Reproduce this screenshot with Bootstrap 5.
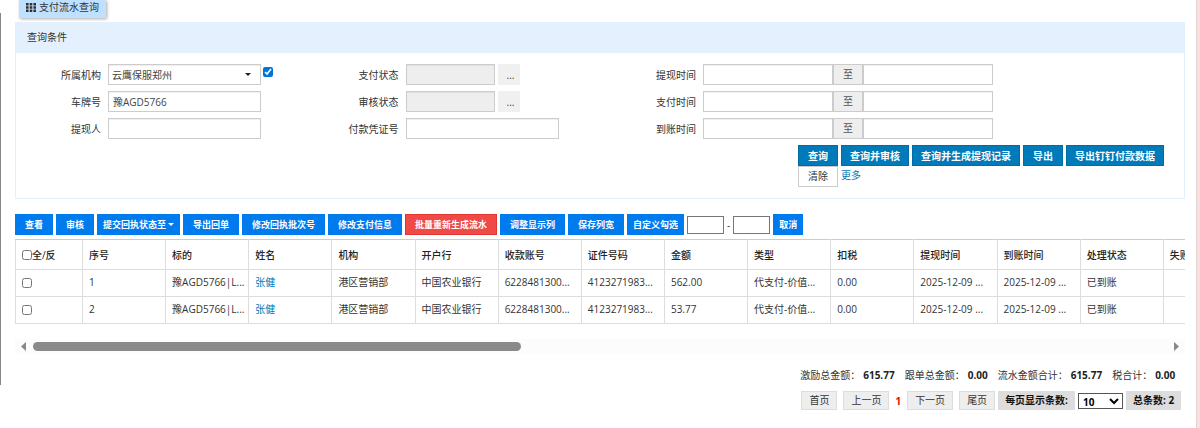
<!DOCTYPE html>
<html lang="zh-CN">
<head>
<meta charset="utf-8">
<meta name="viewport" content="width=device-width, initial-scale=1">
<title>支付流水查询</title>
<link href="https://cdn.jsdelivr.net/npm/bootstrap@5.3.0/dist/css/bootstrap.min.css" rel="stylesheet">
<style>
  body { font: 10px/14px "Open Sans", "Noto Sans CJK SC", sans-serif; color: #333; background: #fff; }
  input, select, button { font-family: inherit; border-radius: 0; }
  a { color: #007ab8; text-decoration: none; }
  .rail { width: 1px; background: #888; margin: 13px 0 43px; }
  .edge { width: 4px; background: #f6e0e0; border-left: 1px solid #e3d2d2; }
  .page-body { padding: 0 11px 0 14px; min-width: 0; }
  .page-tab { height: 18px; margin: 0 0 4px 4px; padding: 0 7px 4px; background: #bfe1ff; box-shadow: 1px 1px 3px #0005; gap: 3px; }
  .query { border: 1px solid #e2effc; height: 177px; }
  .query-title { height: 30px; padding: 0 11px 2px; background: #e4f0fd; }
  .query-fields { margin: 11px -12px 0 -10px; }
  .field-row { height: 21px; margin-bottom: 6px; }
  .field-row > label { width: 95px; padding-top: 1px; margin-right: 7px; text-align: right; flex: none; }
  .box { height: 21px; width: 153px; padding: 0 4px 1px; border: 1px solid #ccc; box-shadow: inset 0 1px 1px #0001; color: #444; background: #fff; font-size: 10px; line-height: 14px; }
  .box:disabled { width: 89px; background: #eee; }
  .box.date { width: 130px; }
  .org { appearance: none; padding: 0 3px; width: 153px;
    background: #fff url("data:image/svg+xml,%3Csvg xmlns='http://www.w3.org/2000/svg' width='6' height='3'%3E%3Cpath d='M0 0h6L3 3z' fill='%23222'/%3E%3C/svg%3E") no-repeat right 9px center; }
  .tick { width: 10px; height: 10px; margin: 0; accent-color: #0075d8; flex: none; }
  .org-tick { margin: 0 0 5px 2px; }
  .more-btn { width: 22px; height: 21px; margin-left: 3px; padding: 1px 0 0 4px; border: 0; background: #f0f0f0; color: #444; }
  .to { width: 30px; height: 21px; padding-bottom: 1px; border: 1px solid #ccc; background: #eee; color: #555; }
  .query-actions { padding-left: 197px; gap: 0 3px; }
  .btn { --bs-btn-border-radius: 0; --bs-btn-line-height: 14px; height: 21px; padding: 0 8px; font-size: 10px; display: inline-flex; align-items: center; justify-content: center; white-space: nowrap; }
  .search-btn { min-width: 40px; font-weight: 700; color: #fff; background: #007ab8; border-color: #006da6; }
  .clear-btn { min-width: 40px; color: #333; background: #fff; border-color: #ccc; padding-bottom: 2px; }
  .tools { margin-top: 15px; gap: 0 3px; height: 21px; }
  .tool-btn { padding: 0 9px; font-size: 9px; font-weight: 700; color: #fff; background: #007bed; border-color: #007bed; }
  .tool-btn.tight { padding: 0 5px; }
  .tool-btn.danger { background: #ef4a45; border-color: #e03530; }
  .caret { border: 3px solid transparent; border-top-color: #fff; border-bottom: 0; margin-left: 2px; }
  .range { width: 37px; height: 18px; border: 1px solid #767676; padding: 0 3px; font-size: 10px; }
  .list { margin-top: 4px; overflow: hidden; }
  .list table { table-layout: fixed; width: 1232px; border-collapse: collapse; }
  .list th, .list td { height: 27px; padding: 0 2px 2px 6px; border: 1px solid #ddd; overflow: hidden; text-overflow: ellipsis; white-space: nowrap; }
  .list th { height: 30px; border-top-color: #ccc; font-weight: 500; color: #222; padding-bottom: 0; }
  .list th:first-child { width: 67px; }
  .list .tick { vertical-align: middle; }
  .scroll { margin-top: 15px; height: 15px; padding: 0 6px; gap: 7px; background: #fcfcfc; }
  .scroll-track { height: 9px; }
  .scroll-thumb { height: 9px; width: 43%; border-radius: 5px; background: #8a8a8a; }
  .totals { margin-top: 14px; padding-right: 10px; gap: 0 10px; }
  .totals b { margin-left: 3px; color: #222; }
  .pager { margin-top: 9px; padding-right: 4px; height: 19px; gap: 0 6px; }
  .page-btn { height: 19px; padding: 0 7px 1px; border: 1px solid #ddd; background: #eee; color: #333; font-size: 10px; line-height: 14px; }
  .page-now { color: #f00; }
  .page-size { gap: 0 3px; margin-left: -3px; }
  .pill { height: 19px; padding: 0 7px 1px; background: #ddd; color: #111; font-weight: 700; white-space: nowrap; }
  .size-select { width: 45px; height: 16px; border: 1px solid #555; color: #000; background: #fff; font-size: 10px; font-weight: 700; line-height: 12px; }
</style>
</head>
<body>
<div class="d-flex min-vh-100">
  <div class="rail"></div>
  <main class="page-body flex-grow-1">
    <div class="page-tab d-inline-flex align-items-center align-top">
      <svg width="10" height="9" viewBox="0 0 10 9" fill="#333" aria-hidden="true"><path d="M0 0h2.600v2.400H0zM3.700 0h2.600v2.400H3.700zM7.400 0H10v2.400H7.400zM0 3.300h2.600v2.400H0zM3.700 3.300h2.600v2.400H3.700zM7.400 3.300H10v2.400H7.400zM0 6.600h2.600V9H0zM3.700 6.600h2.600V9H3.700zM7.400 6.600H10V9H7.400z"/></svg>
      <span>支付流水查询</span>
    </div>

    <form class="query">
      <div class="query-title d-flex align-items-center">查询条件</div>
      <div class="query-fields row g-0">
        <div class="col-3">
          <div class="field-row d-flex align-items-center">
            <label for="org">所属机构</label>
            <select id="org" class="box org"><option>云鹰保服郑州</option></select>
            <input type="checkbox" class="tick org-tick" aria-label="包含下级机构" checked>
          </div>
          <div class="field-row d-flex align-items-center"><label for="plate">车牌号</label><input id="plate" class="box" value="豫AGD5766"></div>
          <div class="field-row d-flex align-items-center"><label for="person">提现人</label><input id="person" class="box"></div>
        </div>
        <div class="col-3">
          <div class="field-row d-flex align-items-center"><label for="pay">支付状态</label><input id="pay" class="box" disabled><button type="button" class="more-btn">...</button></div>
          <div class="field-row d-flex align-items-center"><label for="audit">审核状态</label><input id="audit" class="box" disabled><button type="button" class="more-btn">...</button></div>
          <div class="field-row d-flex align-items-center"><label for="voucher">付款凭证号</label><input id="voucher" class="box"></div>
        </div>
        <div class="col-6">
          <div class="field-row d-flex align-items-center"><label for="d1">提现时间</label><input id="d1" class="box date"><span class="to d-flex align-items-center justify-content-center">至</span><input class="box date" aria-label="提现时间止"></div>
          <div class="field-row d-flex align-items-center"><label for="d2">支付时间</label><input id="d2" class="box date"><span class="to d-flex align-items-center justify-content-center">至</span><input class="box date" aria-label="支付时间止"></div>
          <div class="field-row d-flex align-items-center"><label for="d3">到账时间</label><input id="d3" class="box date"><span class="to d-flex align-items-center justify-content-center">至</span><input class="box date" aria-label="到账时间止"></div>
          <div class="query-actions d-flex flex-wrap">
            <button type="button" class="btn search-btn">查询</button>
            <button type="button" class="btn search-btn">查询并审核</button>
            <button type="button" class="btn search-btn">查询并生成提现记录</button>
            <button type="button" class="btn search-btn">导出</button>
            <button type="button" class="btn search-btn">导出钉钉付款数据</button>
            <button type="reset" class="btn clear-btn">清除</button>
            <a href="#" class="pt-1 lh-1">更多</a>
          </div>
        </div>
      </div>
    </form>

    <div class="tools d-flex align-items-center">
      <button class="btn tool-btn">查看</button>
      <button class="btn tool-btn">审核</button>
      <button class="btn tool-btn tight">提交回执状态至<span class="caret"></span></button>
      <button class="btn tool-btn">导出回单</button>
      <button class="btn tool-btn">修改回执批次号</button>
      <button class="btn tool-btn">修改支付信息</button>
      <button class="btn tool-btn danger">批量重新生成流水</button>
      <button class="btn tool-btn">调整显示列</button>
      <button class="btn tool-btn">保存列宽</button>
      <button class="btn tool-btn tight">自定义勾选</button>
      <input class="range" aria-label="起始序号"><span>-</span><input class="range" aria-label="结束序号">
      <button class="btn tool-btn tight">取消</button>
    </div>

    <div class="list">
      <table>
        <thead>
          <tr><th><label class="d-flex align-items-center"><input type="checkbox" class="tick">全/反</label></th><th>序号</th><th>标的</th><th>姓名</th><th>机构</th><th>开户行</th><th>收款账号</th><th>证件号码</th><th>金额</th><th>类型</th><th>扣税</th><th>提现时间</th><th>到账时间</th><th>处理状态</th><th>失败</th></tr>
        </thead>
        <tbody>
          <tr><td><input type="checkbox" class="tick" aria-label="选择第1行"></td><td>1</td><td>豫AGD5766|L...</td><td><a href="#">张健</a></td><td>港区营销部</td><td>中国农业银行</td><td>6228481300...</td><td>4123271983...</td><td>562.00</td><td>代支付-价值...</td><td>0.00</td><td>2025-12-09 ...</td><td>2025-12-09 ...</td><td>已到账</td><td></td></tr>
          <tr><td><input type="checkbox" class="tick" aria-label="选择第2行"></td><td>2</td><td>豫AGD5766|L...</td><td><a href="#">张健</a></td><td>港区营销部</td><td>中国农业银行</td><td>6228481300...</td><td>4123271983...</td><td>53.77</td><td>代支付-价值...</td><td>0.00</td><td>2025-12-09 ...</td><td>2025-12-09 ...</td><td>已到账</td><td></td></tr>
        </tbody>
      </table>
    </div>

    <div class="scroll d-flex align-items-center">
      <svg width="5" height="9" viewBox="0 0 5 9" fill="#888" aria-hidden="true"><path d="M5 0v9L0 4.500z"/></svg>
      <div class="scroll-track flex-grow-1"><div class="scroll-thumb"></div></div>
      <svg width="5" height="9" viewBox="0 0 5 9" fill="#888" aria-hidden="true"><path d="M0 0v9l5-4.500z"/></svg>
    </div>

    <div class="totals d-flex justify-content-end">
      <span>激励总金额：<b>615.77</b></span><span>跟单总金额：<b>0.00</b></span><span>流水金额合计：<b>615.77</b></span><span>税合计：<b>0.00</b></span>
    </div>
    <nav class="pager d-flex align-items-center justify-content-end" aria-label="分页">
      <button class="page-btn">首页</button>
      <button class="page-btn">上一页</button>
      <b class="page-now">1</b>
      <button class="page-btn">下一页</button>
      <button class="page-btn">尾页</button>
      <div class="page-size d-flex align-items-center">
        <label for="size" class="pill d-flex align-items-center">每页显示条数:</label>
        <select id="size" class="size-select"><option>10</option></select>
        <span class="pill d-flex align-items-center">总条数: 2</span>
      </div>
    </nav>
  </main>
  <div class="edge"></div>
</div>
<script src="https://cdn.jsdelivr.net/npm/bootstrap@5.3.0/dist/js/bootstrap.bundle.min.js"></script>
</body>
</html>
